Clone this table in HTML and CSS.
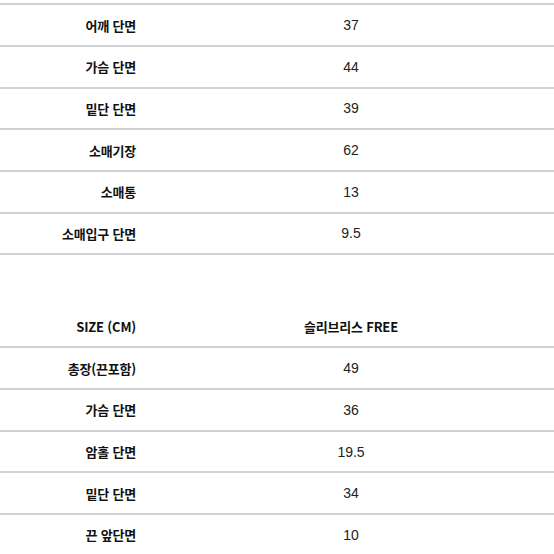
FILE: index.html
```html
<!DOCTYPE html>
<html lang="ko">
<head>
<meta charset="utf-8">
<link rel="stylesheet" href="styles.css">
</head>
<body>
<div class="table first">
  <div class="row"><div class="label">어깨 단면</div><div class="value">37</div></div>
  <div class="row"><div class="label">가슴 단면</div><div class="value">44</div></div>
  <div class="row"><div class="label">밑단 단면</div><div class="value">39</div></div>
  <div class="row"><div class="label">소매기장</div><div class="value">62</div></div>
  <div class="row"><div class="label">소매통</div><div class="value">13</div></div>
  <div class="row"><div class="label">소매입구 단면</div><div class="value">9.5</div></div>
</div>
<div class="table second">
  <div class="row"><div class="label">SIZE (CM)</div><div class="value head">슬리브리스 FREE</div></div>
  <div class="row"><div class="label">총장(끈포함)</div><div class="value">49</div></div>
  <div class="row"><div class="label">가슴 단면</div><div class="value">36</div></div>
  <div class="row"><div class="label">암홀 단면</div><div class="value">19.5</div></div>
  <div class="row"><div class="label">밑단 단면</div><div class="value">34</div></div>
  <div class="row"><div class="label">끈 앞단면</div><div class="value">10</div></div>
</div>
</body>
</html>
```

FILE: styles.css
```css
html, body {
  margin: 0;
  padding: 0;
  background: #ffffff;
  width: 554px;
  height: 554px;
  overflow: hidden;
}
.table {
  display: flex;
  flex-direction: column;
}
.table.first {
  margin-top: 3.3px;
  border-top: 2px solid #d2d2d2;
}
.table.second {
  margin-top: 51.5px;
}
.row {
  display: grid;
  grid-template-columns: 148px 1fr;
  align-items: center;
  height: 39.67px;
  border-bottom: 2px solid #d2d2d2;
}
.label {
  text-align: right;
  padding-right: 12px;
  font-family: "Noto Sans CJK KR", "Noto Sans", sans-serif;
  font-weight: 700;
  font-size: 13px;
  letter-spacing: -0.2px;
  color: #111111;
}
.value {
  text-align: center;
  font-family: "Liberation Sans", "Noto Sans CJK KR", sans-serif;
  font-size: 14px;
  color: #222222;
}
.value.head {
  font-family: "Noto Sans CJK KR", sans-serif;
  font-weight: 700;
  font-size: 13px;
  letter-spacing: -0.2px;
  color: #111111;
}
```
